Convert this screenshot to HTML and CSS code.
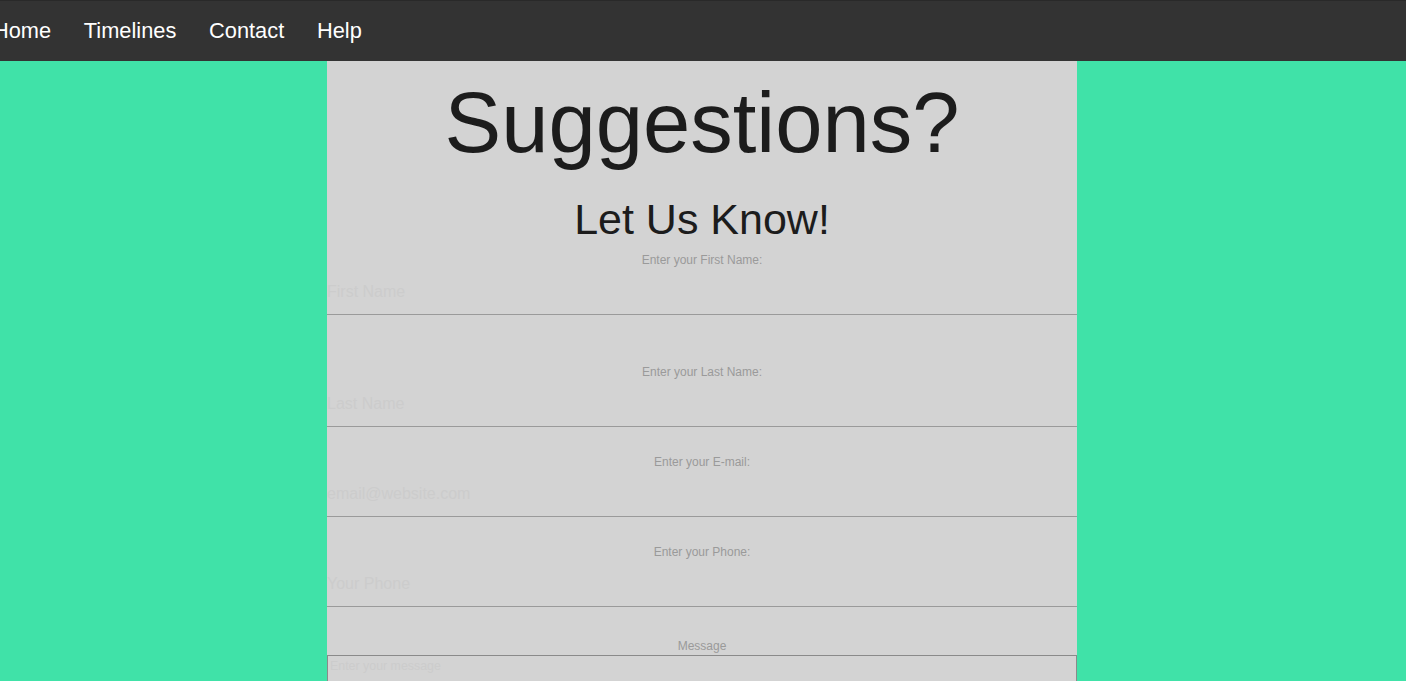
FILE: index.html
```html
<!DOCTYPE html>
<html lang="en">
<head>
<meta charset="utf-8">
<title>Suggestions?</title>
<link rel="stylesheet" href="styles.css">
</head>
<body>
<nav class="topnav">
  <ul class="topnav-list">
    <li><a class="topnav-link" href="#">Home</a></li>
    <li><a class="topnav-link" href="#">Timelines</a></li>
    <li><a class="topnav-link" href="#">Contact</a></li>
    <li><a class="topnav-link" href="#">Help</a></li>
  </ul>
</nav>
<main class="panel">
  <h1 class="panel-title">Suggestions?</h1>
  <h2 class="panel-subtitle">Let Us Know!</h2>
  <form class="form">
    <label class="field-label" for="first">Enter your First Name:</label>
    <input class="field-input" id="first" type="text" placeholder="First Name">
    <label class="field-label field-label--wide" for="last">Enter your Last Name:</label>
    <input class="field-input" id="last" type="text" placeholder="Last Name">
    <label class="field-label field-label--tight" for="email">Enter your E-mail:</label>
    <input class="field-input" id="email" type="email" placeholder="email@website.com">
    <label class="field-label field-label--tight" for="phone">Enter your Phone:</label>
    <input class="field-input" id="phone" type="text" placeholder="Your Phone">
    <label class="field-label field-label--msg" for="msg">Message</label>
    <textarea class="field-area" id="msg" placeholder="Enter your message"></textarea>
  </form>
</main>
</body>
</html>
```
FILE: styles.css
```css
html, body {
  margin: 0;
  padding: 0;
}
body {
  background: #40e2a8;
  font-family: "Liberation Sans", Arial, Helvetica, sans-serif;
  overflow: hidden;
}
.topnav {
  background: #333333;
  height: 60px;
  border-top: 1px solid #292929;
  display: flex;
  align-items: center;
}
.topnav-list {
  list-style: none;
  margin: 0 0 0 -23.5px;
  padding: 0;
  display: flex;
}
.topnav-link {
  display: block;
  padding: 0 16.4px;
  color: #ffffff;
  text-decoration: none;
  font-size: 21.8px;
  line-height: 26px;
}
.panel {
  width: 750px;
  margin-left: calc(50% - 376px);
  background: #d3d3d3;
  display: flex;
  flex-direction: column;
  min-height: 700px;
}
.panel-title {
  margin: 17px 0 0;
  font-size: 85px;
  line-height: 90px;
  font-weight: normal;
  text-align: center;
  color: #1c1c1c;
}
.panel-subtitle {
  margin: 26px 0 0;
  font-size: 43px;
  line-height: 50px;
  font-weight: normal;
  text-align: center;
  color: #1c1c1c;
}
.form {
  display: flex;
  flex-direction: column;
  margin-top: 9px;
}
.field-label {
  display: block;
  font-size: 12px;
  line-height: 14px;
  color: #9a9a9a;
  text-align: center;
}
.field-label--wide {
  margin-top: 50px;
}
.field-label--tight {
  margin-top: 28px;
}
.field-label--msg {
  margin-top: 32px;
}
.field-input {
  display: block;
  box-sizing: border-box;
  width: 100%;
  height: 46px;
  margin: 2px 0 0;
  padding: 0;
  border: none;
  border-bottom: 1px solid #9a9a9a;
  background: transparent;
  font-family: "Liberation Sans", Arial, sans-serif;
  font-size: 16px;
  color: #333;
  outline: none;
}
.field-input::placeholder,
.field-area::placeholder {
  color: #cccccc;
}
.field-area {
  display: block;
  box-sizing: border-box;
  width: 100%;
  height: 120px;
  margin: 2px 0 0;
  padding: 3px 2px;
  border: 1px solid #8a8a8a;
  background: transparent;
  font-family: "Liberation Sans", Arial, sans-serif;
  font-size: 12.4px;
  line-height: 14px;
  resize: none;
}
```
